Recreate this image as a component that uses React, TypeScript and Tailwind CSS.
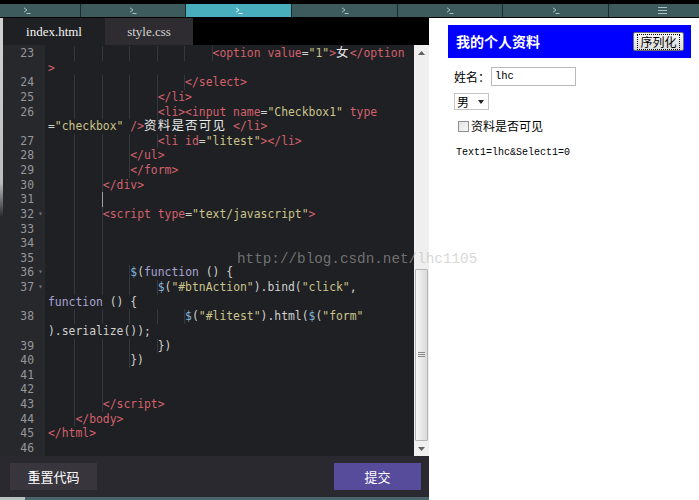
import React from "react";

const COLORS = {
  t: "text-[#d3606c]",
  s: "text-[#cbc48b]",
  p: "text-[#cfcfcf]",
  z: "text-[#e8e8e8] text-[12.5px] tracking-[1.2px]",
  f: "text-[#a8a4d2]",
  d: "text-[#82b6dc]",
};

type Tok = [string, keyof typeof COLORS];
type Row = { n?: number; fold?: boolean; lvl: number; toks?: Tok[]; cursor?: boolean };

const rows: Row[] = [
  { n: 23, lvl: 6, toks: [["<option value", "t"], ["=", "p"], ['"1"', "s"], [">", "t"], ["女", "z"], ["</option", "t"]] },
  { lvl: 0, toks: [[">", "t"]] },
  { n: 24, lvl: 5, toks: [["</select>", "t"]] },
  { n: 25, lvl: 4, toks: [["</li>", "t"]] },
  { n: 26, lvl: 4, toks: [["<li><input name", "t"], ["=", "p"], ['"Checkbox1"', "s"], [" type", "t"]] },
  { lvl: 0, toks: [["=", "p"], ['"checkbox"', "s"], [" />", "t"], ["资料是否可见", "z"], [" </li>", "t"]] },
  { n: 27, lvl: 4, toks: [["<li id", "t"], ["=", "p"], ['"litest"', "s"], ["></li>", "t"]] },
  { n: 28, lvl: 3, toks: [["</ul>", "t"]] },
  { n: 29, lvl: 3, toks: [["</form>", "t"]] },
  { n: 30, lvl: 2, toks: [["</div>", "t"]] },
  { n: 31, lvl: 2, cursor: true },
  { n: 32, fold: true, lvl: 2, toks: [["<script type", "t"], ["=", "p"], ['"text/javascript"', "s"], [">", "t"]] },
  { n: 33, lvl: 2 },
  { n: 34, lvl: 2 },
  { n: 35, lvl: 2 },
  { n: 36, fold: true, lvl: 3, toks: [["$", "d"], ["(", "p"], ["function", "f"], [" () {", "p"]] },
  { n: 37, fold: true, lvl: 4, toks: [["$", "d"], ["(", "p"], ['"#btnAction"', "s"], [").bind(", "p"], ['"click"', "s"], [",", "p"]] },
  { lvl: 0, toks: [["function", "f"], [" () {", "p"]] },
  { n: 38, lvl: 5, toks: [["$", "d"], ["(", "p"], ['"#litest"', "s"], [").html(", "p"], ["$", "d"], ["(", "p"], ['"form"', "s"]] },
  { lvl: 0, toks: [[").serialize());", "p"]] },
  { n: 39, lvl: 4, toks: [["})", "p"]] },
  { n: 40, lvl: 3, toks: [["})", "p"]] },
  { n: 41, lvl: 2 },
  { n: 42, lvl: 2 },
  { n: 43, lvl: 2, toks: [["</script>", "t"]] },
  { n: 44, lvl: 1, toks: [["</body>", "t"]] },
  { n: 45, lvl: 0, toks: [["</html>", "t"]] },
  { n: 46, lvl: 0 },
];

const segs = [
  { w: "w-[80px]", icon: "term", cls: "justify-start pl-[23px]" },
  { w: "w-[105px]", icon: "term", cls: "justify-center" },
  { w: "w-[106px]", icon: "term", cls: "justify-center", on: true },
  { w: "w-[106px]", icon: "term", cls: "justify-center" },
  { w: "w-[105px]", icon: "term", cls: "justify-center" },
  { w: "w-[106px]", icon: "term", cls: "justify-center" },
  { w: "flex-1", icon: "menu", cls: "justify-start pl-[49px]" },
];

function TermIcon({ on }: { on?: boolean }) {
  return (
    <svg width="8" height="7" viewBox="0 0 8 7" className={on ? "text-[#e4f4f6]" : "text-[#a9c1c3]"}>
      <path d="M1 0.8l3 2.2-3 2.2" stroke="currentColor" strokeWidth="1" fill="none" />
      <path d="M3.5 6.5h4" stroke="currentColor" strokeWidth="1" />
    </svg>
  );
}

function MenuIcon() {
  return (
    <svg width="9" height="7" viewBox="0 0 9 7" className="text-[#a9c1c3]">
      <path d="M0 0.5h9M0 3.5h9M0 6.5h9" stroke="currentColor" strokeWidth="1" />
    </svg>
  );
}

function TopBar() {
  return (
    <div className="h-[18px] bg-black pt-[4px] pb-[1px] flex">
      {segs.map((s, i) => (
        <div
          key={i}
          className={`${s.w} h-[13px] flex items-center ${s.cls} ${i > 0 ? "border-l border-[#1d2a2c]" : ""} ${
            s.on ? "bg-[#48aebd]" : "bg-[#3d5a5d]"
          }`}
        >
          {s.icon === "term" ? <TermIcon on={s.on} /> : <MenuIcon />}
        </div>
      ))}
    </div>
  );
}

function CodeRow({ r }: { r: Row }) {
  return (
    <div className="flex h-[14.63px] leading-[14.63px]">
      <div className="w-[45px] shrink-0 flex">
        <span className="w-[34px] text-right text-[#96979a]">{r.n ?? ""}</span>
        {r.fold && <span className="pl-[4px] text-[8px] text-[#707175]">▾</span>}
      </div>
      <div className="pl-[3px] whitespace-pre">
        {Array.from({ length: r.lvl }).map((_, i) => (
          <span key={i} className="inline-block w-[4ch] h-[14.63px] align-top border-r border-[#36373b]" />
        ))}
        {r.cursor && <span className="inline-block w-px h-[14.63px] align-top bg-[#a0a0a0] -ml-px" />}
        {(r.toks ?? []).map(([text, k], i) => (
          <span key={i} className={COLORS[k]}>
            {text}
          </span>
        ))}
      </div>
    </div>
  );
}

function Scrollbar() {
  return (
    <div className="w-[15px] bg-[#efefef] flex flex-col">
      <div className="h-[15px] flex items-center justify-center">
        <svg width="7" height="4" viewBox="0 0 7 4">
          <path d="M0 4l3.5-4 3.5 4z" fill="#606060" />
        </svg>
      </div>
      <div className="flex-1 flex flex-col justify-end px-px">
        <div className="h-[172px] bg-[linear-gradient(to_right,#f6f6f6,#dadada)] border border-[#b4b4b4] rounded-[1px] flex items-center justify-center">
          <svg width="7" height="6" viewBox="0 0 7 6">
            <path d="M0 0.5h7M0 2.5h7M0 4.5h7" stroke="#8a8a8a" strokeWidth="1" />
          </svg>
        </div>
      </div>
      <div className="h-[15px] flex items-center justify-center">
        <svg width="7" height="4" viewBox="0 0 7 4">
          <path d="M0 0l3.5 4 3.5-4z" fill="#606060" />
        </svg>
      </div>
    </div>
  );
}

function EditorPanel() {
  return (
    <div className="w-[429px] flex flex-col bg-black">
      <div className="h-[27px] flex font-['Liberation_Serif',serif] text-[13px]">
        <div className="w-[3px] bg-[#cfcfcf]" />
        <div className="w-[102px] bg-[#1f2023] text-[#f4f4f4] flex items-center justify-center">index.html</div>
        <div className="w-[88px] bg-[#2e2b31] text-[#d4d4d4] flex items-center justify-center">style.css</div>
      </div>
      <div className="flex-1 flex min-h-0">
        <div className="flex-1 bg-[linear-gradient(to_right,#27282c_45px,#1f2023_45px)] pt-px font-['DejaVu_Sans_Mono','Noto_Sans_CJK_SC',monospace] text-[11.4px] overflow-hidden relative">
          <div className="absolute left-0 top-0 w-[3px] h-[172px] bg-[linear-gradient(to_bottom,#cfcfcf,#bdbdbd_80%,#27282c)]" />
          {rows.map((r, i) => (
            <CodeRow key={i} r={r} />
          ))}
        </div>
        <Scrollbar />
      </div>
      <div className="h-[41px] bg-[#2b2930] flex items-center justify-between pl-[10px] pr-[8px] font-['Noto_Sans_CJK_SC',sans-serif] text-[13px] text-white">
        <button className="w-[87px] h-[27px] bg-[#38353d]">重置代码</button>
        <button className="w-[87px] h-[27px] bg-[#574b9c]">提交</button>
      </div>
      <div className="h-[3px] bg-[linear-gradient(to_right,#b9c3c4_25px,#4b666a_25px)]" />
    </div>
  );
}

function ProfilePanel() {
  return (
    <div className="flex-1 bg-white pl-[19px] pr-[8px] pt-[7px] font-['Noto_Sans_CJK_SC',sans-serif] text-black">
      <div className="h-[33px] bg-[#0000ff] flex items-center justify-between pl-[8px] pr-[7px]">
        <span className="text-white text-[14px] font-bold">我的个人资料</span>
        <button className="w-[51px] h-[19px] bg-[linear-gradient(to_bottom,#f7f7f7,#dcdcdc)] border border-[#707070] rounded-[2px] flex items-center justify-center text-[12px] leading-none">
          <span className="border border-dotted border-black px-[2px] py-px">序列化</span>
        </button>
      </div>
      <div className="mt-[9px] flex items-center h-[19px] pl-[6px]">
        <span className="text-[12px]">姓名：</span>
        <div className="ml-px w-[85px] h-[19px] border border-[#b9b9b9] flex items-center pl-[3px] font-['Liberation_Mono',monospace] text-[10.5px]">
          lhc
        </div>
      </div>
      <div className="mt-[7px] ml-[6px] w-[35px] h-[17px] border border-[#c4c4c4] flex items-center pl-[2px] text-[12px]">
        <span>男</span>
        <svg width="6" height="4" viewBox="0 0 6 4" className="ml-[9px]">
          <path d="M0 0h6L3 4z" fill="#222" />
        </svg>
      </div>
      <div className="mt-[9px] ml-[10px] h-[14px] flex items-center">
        <span className="w-[11px] h-[11px] border border-[#8e8e8e] bg-[linear-gradient(135deg,#e2e2e2,#f8f8f8)]" />
        <span className="ml-[2px] text-[12px]">资料是否可见</span>
      </div>
      <div className="mt-[14px] ml-[8px] h-[12px] leading-[12px] font-['Liberation_Mono',monospace] text-[10px]">
        Text1=lhc&amp;Select1=0
      </div>
    </div>
  );
}

export default function App() {
  return (
    <div className="w-[699px] h-[500px] relative overflow-hidden bg-black flex flex-col">
      <TopBar />
      <div className="flex h-[482px]">
        <EditorPanel />
        <ProfilePanel />
      </div>
      <div className="absolute left-[237px] top-[250px] leading-[18px] font-['Liberation_Mono',monospace] text-[14.3px] text-[rgba(182,182,182,0.55)] pointer-events-none whitespace-pre">
        http://blog.csdn.net/lhc1105
      </div>
    </div>
  );
}
